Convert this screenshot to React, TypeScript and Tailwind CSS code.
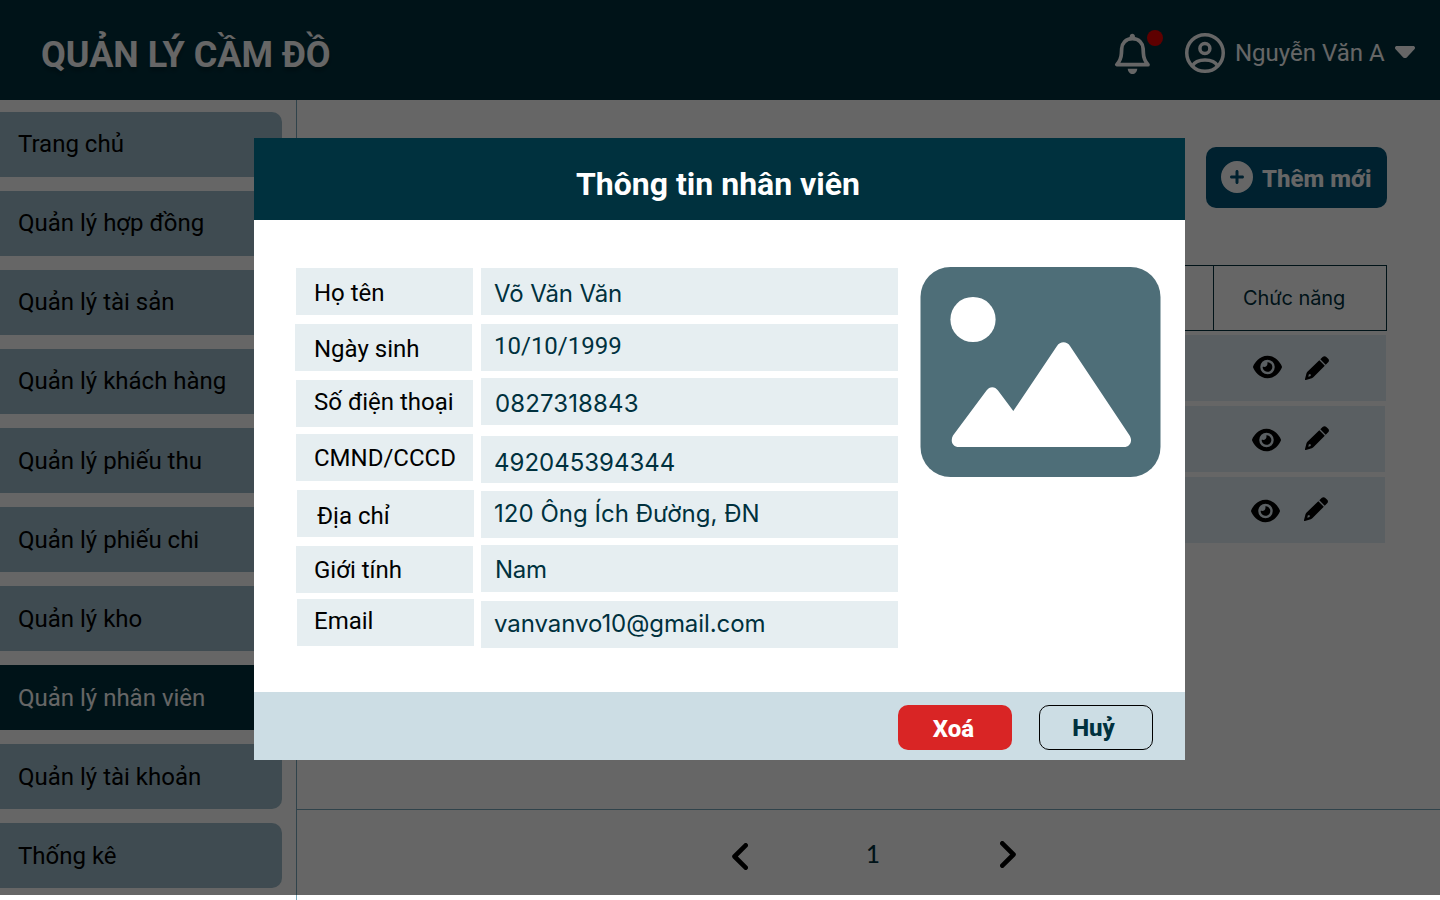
import { FaEye, FaCirclePlus } from "react-icons/fa6";

const menu = [
  { label: "Trang chủ", tone: "bg-[#9EBCCA] pt-[18px] text-black" },
  { label: "Quản lý hợp đồng", tone: "bg-[#9EBCCA] pt-[18px] text-black" },
  { label: "Quản lý tài sản", tone: "bg-[#9EBCCA] pt-[18px] text-black" },
  { label: "Quản lý khách hàng", tone: "bg-[#9EBCCA] pt-[18px] text-black" },
  { label: "Quản lý phiếu thu", tone: "bg-[#9EBCCA] pt-[19px] text-black" },
  { label: "Quản lý phiếu chi", tone: "bg-[#9EBCCA] pt-[19px] text-black" },
  { label: "Quản lý kho", tone: "bg-[#9EBCCA] pt-[19px] text-black" },
  { label: "Quản lý nhân viên", tone: "bg-[#00313E] pt-[19px] text-white" },
  { label: "Quản lý tài khoản", tone: "bg-[#9EBCCA] pt-[19px] text-black" },
  { label: "Thống kê", tone: "bg-[#9EBCCA] pt-[19px] text-black" },
];

const labels = [
  { text: "Họ tên", box: "pl-[18px] pt-[11px]" },
  { text: "Ngày sinh", box: "-ml-px mt-[9px] pl-[19px] pt-[11px]" },
  { text: "Số điện thoại", box: "mt-[9px] pl-[18px] pt-[8px]" },
  { text: "CMND/CCCD", box: "mt-[7px] pl-[18px] pt-[10px]" },
  { text: "Địa chỉ", box: "ml-px mt-[9px] pl-[20px] pt-[12px]" },
  { text: "Giới tính", box: "mt-[9px] pl-[18px] pt-[10px]" },
  { text: "Email", box: "ml-px mt-[6px] pl-[17px] pt-[8px]" },
];

const values = [
  { text: "Võ Văn Văn", box: "pl-[13px] pt-[12px] font-[Inter,sans-serif] tracking-[-0.12px]" },
  { text: "10/10/1999", box: "mt-[9px] pl-[13px] pt-[8px] font-[Roboto,sans-serif]" },
  { text: "0827318843", box: "mt-[7px] pl-[14px] pt-[12px] font-[Inter,sans-serif] tracking-[0.12px]" },
  { text: "492045394344", box: "mt-[11px] pl-[13px] pt-[13px] font-[Inter,sans-serif]" },
  { text: "120 Ông Ích Đường, ĐN", box: "mt-[8px] pl-[13px] pt-[9px] font-[Inter,sans-serif] tracking-[0.03px]" },
  { text: "Nam", box: "mt-[7px] pl-[14px] pt-[11px] font-[Inter,sans-serif] tracking-[-0.3px]" },
  { text: "vanvanvo10@gmail.com", box: "mt-[9px] pl-[13px] pt-[9px] font-[Inter,sans-serif] tracking-[-0.07px]" },
];

const tableRows = [
  { row: "mt-[4px] w-[1050px]", eye: "ml-[917px] mt-[19px]", pencil: "ml-[23px] mt-[21px]" },
  { row: "mt-[5px] w-[1049px]", eye: "ml-[916px] mt-[21px]", pencil: "ml-[24px] mt-[20px]" },
  { row: "mt-[5px] w-[1049px]", eye: "ml-[915px] mt-[21px]", pencil: "ml-[24px] mt-[20px]" },
];

function Bell() {
  return (
    <svg className="mt-[33px] h-[42px] w-[37px] shrink-0" viewBox="0 0 37 42" fill="none">
      <path d="M15.7 5V3.400C15.700 0 20.900 0 20.900 3.400V5Z" fill="white" />
      <path
        d="M18.400 5.700C11.500 5.700 8 10.500 7.700 15.500L7.400 20.500C7.200 25.500 5.500 28.500 2.800 31.700H34C31.200 28.500 29.600 25.500 29.400 20.500L29.100 15.500C28.800 10.500 25.300 5.700 18.400 5.700Z"
        stroke="white"
        strokeWidth="3.700"
        strokeLinejoin="round"
      />
      <path d="M13.700 35.700H23.300C23 38.800 21 41 18.500 41S14 38.800 13.700 35.700Z" fill="white" />
    </svg>
  );
}

function UserCircle() {
  return (
    <svg className="ml-[22px] mt-[33px] size-[40px] shrink-0" viewBox="0 0 40 40" fill="none" stroke="white" strokeWidth="3.500">
      <circle cx="20" cy="20" r="18.250" />
      <circle cx="19.900" cy="15.600" r="5" />
      <path d="M7.500 32.800C9.500 28.800 14 26.900 20 26.900S30.500 28.800 32.500 32.800" />
    </svg>
  );
}

function Pencil({ place }: { place: string }) {
  return (
    <svg className={"size-[24px] shrink-0 " + place} viewBox="0 0 24 24">
      <path d="M15.300 3.300L17.600 1C18.700-.1 20.300-.1 21.300.9L23.200 2.800C24.200 3.800 24.200 5.300 23.200 6.300L20.700 8.800Z" />
      <path
        fillRule="evenodd"
        d="M14.300 4.200L19.800 9.700L8.300 21.300C7.900 21.700 7.400 22 6.800 22.200L.9 24C.4 24.100-.1 23.700 0 23.100L1.500 17.200C1.700 16.600 2 16.100 2.400 15.700ZM3.900 18.300L3.300 20.700L5.700 20V18.300Z"
      />
    </svg>
  );
}

function Placeholder() {
  return (
    <svg className="ml-[22px] mt-[47px] h-[211px] w-[241px] shrink-0" viewBox="0 0 241 211">
      <rect x="0.500" width="240" height="210" rx="30" fill="#4E6E78" />
      <circle cx="53" cy="52.500" r="22.600" fill="white" />
      <path
        d="M66.500 123.500C69.500 119 75 119 78 123.500L93.300 144L137 79C140 74 147 74 150 79L209.600 168.500C213 174 210 180 204 180H39C32.500 180 30 174 33 168.500Z"
        fill="white"
      />
    </svg>
  );
}

function Page() {
  return (
    <div className="flex h-[900px] w-[1440px] flex-col bg-white">
      <header className="flex h-[100px] shrink-0 bg-[#00313E] text-white">
        <h1 className="ml-[41px] mt-[34px] w-[1073px] text-[36px] font-bold leading-[42px] [text-shadow:0_4px_4px_rgba(0,0,0,0.25)]">
          QUẢN LÝ CẦM ĐỒ
        </h1>
        <Bell />
        <span className="-ml-[4px] mt-[30px] size-[16px] shrink-0 rounded-full bg-[#EB0000]" />
        <UserCircle />
        <span className="ml-[10px] mt-[39px] w-[150px] whitespace-nowrap text-[24px] leading-[28px]">Nguyễn Văn A</span>
        <svg className="ml-[10px] mt-[46px] h-[13px] w-[20px] shrink-0" viewBox="0 0 20 13" fill="white">
          <path d="M2 0H18C20 0 20.600 2 19.400 3.300L12 11.200C10.800 12.400 9.200 12.400 8 11.200L.6 3.300C-.6 2 0 0 2 0Z" />
        </svg>
      </header>
      <div className="flex h-[800px] shrink-0">
        <nav className="flex w-[297px] shrink-0 flex-col gap-[14px] border-r border-[#79A9BC] pt-[12px]">
          {menu.map((m) => (
            <div
              key={m.label}
              className={"h-[65px] w-[282px] shrink-0 rounded-r-[10px] pl-[18px] text-[24px] leading-[28px] " + m.tone}
            >
              {m.label}
            </div>
          ))}
        </nav>
        <main className="flex flex-1 flex-col">
          <button className="ml-[909px] mt-[47px] flex h-[61px] w-[181px] shrink-0 rounded-[10px] bg-[#005377] pl-[15px] text-white">
            <FaCirclePlus className="mt-[14px] size-[32px]" />
            <span className="ml-[9px] mt-[18px] whitespace-nowrap text-[24px] font-extrabold leading-[28px]">Thêm mới</span>
          </button>
          <div className="ml-[39px] mt-[57px] flex h-[66px] w-[1051px] shrink-0 justify-end border border-[#00313E]">
            <div className="w-[173px] border-l border-[#00313E] pl-[29px] pt-[20px] font-[Inter,sans-serif] text-[20px] leading-[24px] tracking-[-0.08px] text-[#00313E]">
              Chức năng
            </div>
          </div>
          {tableRows.map((r) => (
            <div key={r.eye} className={"ml-[39px] flex h-[66px] shrink-0 items-start bg-[#E1EDF4] text-black " + r.row}>
              <FaEye className={"h-[26px] w-[29px] shrink-0 " + r.eye} />
              <Pencil place={r.pencil} />
            </div>
          ))}
          <div className="mt-auto flex h-[91px] items-start border-t border-[#79A9BC] text-black">
            <svg className="ml-[435px] mt-[33px] h-[27px] w-[16px]" viewBox="0 0 16 27" fill="none" stroke="black" strokeWidth="4.600" strokeLinecap="round" strokeLinejoin="round">
              <path d="M13.700 2.300L2.500 13.500L13.700 24.700" />
            </svg>
            <span className="ml-[118px] mt-[30px] w-[14px] font-[Lato,sans-serif] text-[24px] font-medium leading-[28px] text-[#00313E]">1</span>
            <svg className="ml-[120px] mt-[31px] h-[27px] w-[16px]" viewBox="0 0 16 27" fill="none" stroke="black" strokeWidth="4.600" strokeLinecap="round" strokeLinejoin="round">
              <path d="M2.300 2.300L13.500 13.500L2.300 24.700" />
            </svg>
          </div>
        </main>
      </div>
    </div>
  );
}

function Modal() {
  return (
    <section className="flex h-[622px] w-[931px] flex-col bg-white">
      <h2 className="h-[82px] shrink-0 bg-[#00313E] pr-[3px] pt-[27px] text-center text-[32px] font-bold leading-[38px] text-white">
        Thông tin nhân viên
      </h2>
      <div className="flex flex-1">
        <div className="ml-[42px] mt-[48px] w-[185px]">
          {labels.map((l) => (
            <div key={l.text} className={"h-[47px] w-[177px] whitespace-nowrap bg-[#E6EEF1] text-[24px] leading-[28px] text-black " + l.box}>
              {l.text}
            </div>
          ))}
        </div>
        <div className="mt-[48px] w-[417px]">
          {values.map((v) => (
            <div key={v.text} className={"h-[47px] whitespace-nowrap bg-[#E6EEF1] text-[24px] leading-[28px] text-[#00313E] " + v.box}>
              {v.text}
            </div>
          ))}
        </div>
        <Placeholder />
      </div>
      <footer className="flex h-[68px] shrink-0 bg-[#CCDDE4] pt-[13px] text-[24px] font-extrabold leading-[28px]">
        <button className="ml-[644px] h-[45px] w-[114px] rounded-[10px] bg-[#D92525] pb-px pr-[3px] pt-[3px] text-white">Xoá</button>
        <button className="ml-[27px] h-[45px] w-[114px] rounded-[10px] border border-black pr-[5px] text-[#00313E]">Huỷ</button>
      </footer>
    </section>
  );
}

export default function App() {
  return (
    <div className="relative h-[900px] w-[1440px] overflow-hidden font-[Roboto,sans-serif]">
      <Page />
      <div className="absolute left-0 top-0 h-[895px] w-[1440px] bg-black/60 pl-[254px] pt-[138px]">
        <Modal />
      </div>
    </div>
  );
}
